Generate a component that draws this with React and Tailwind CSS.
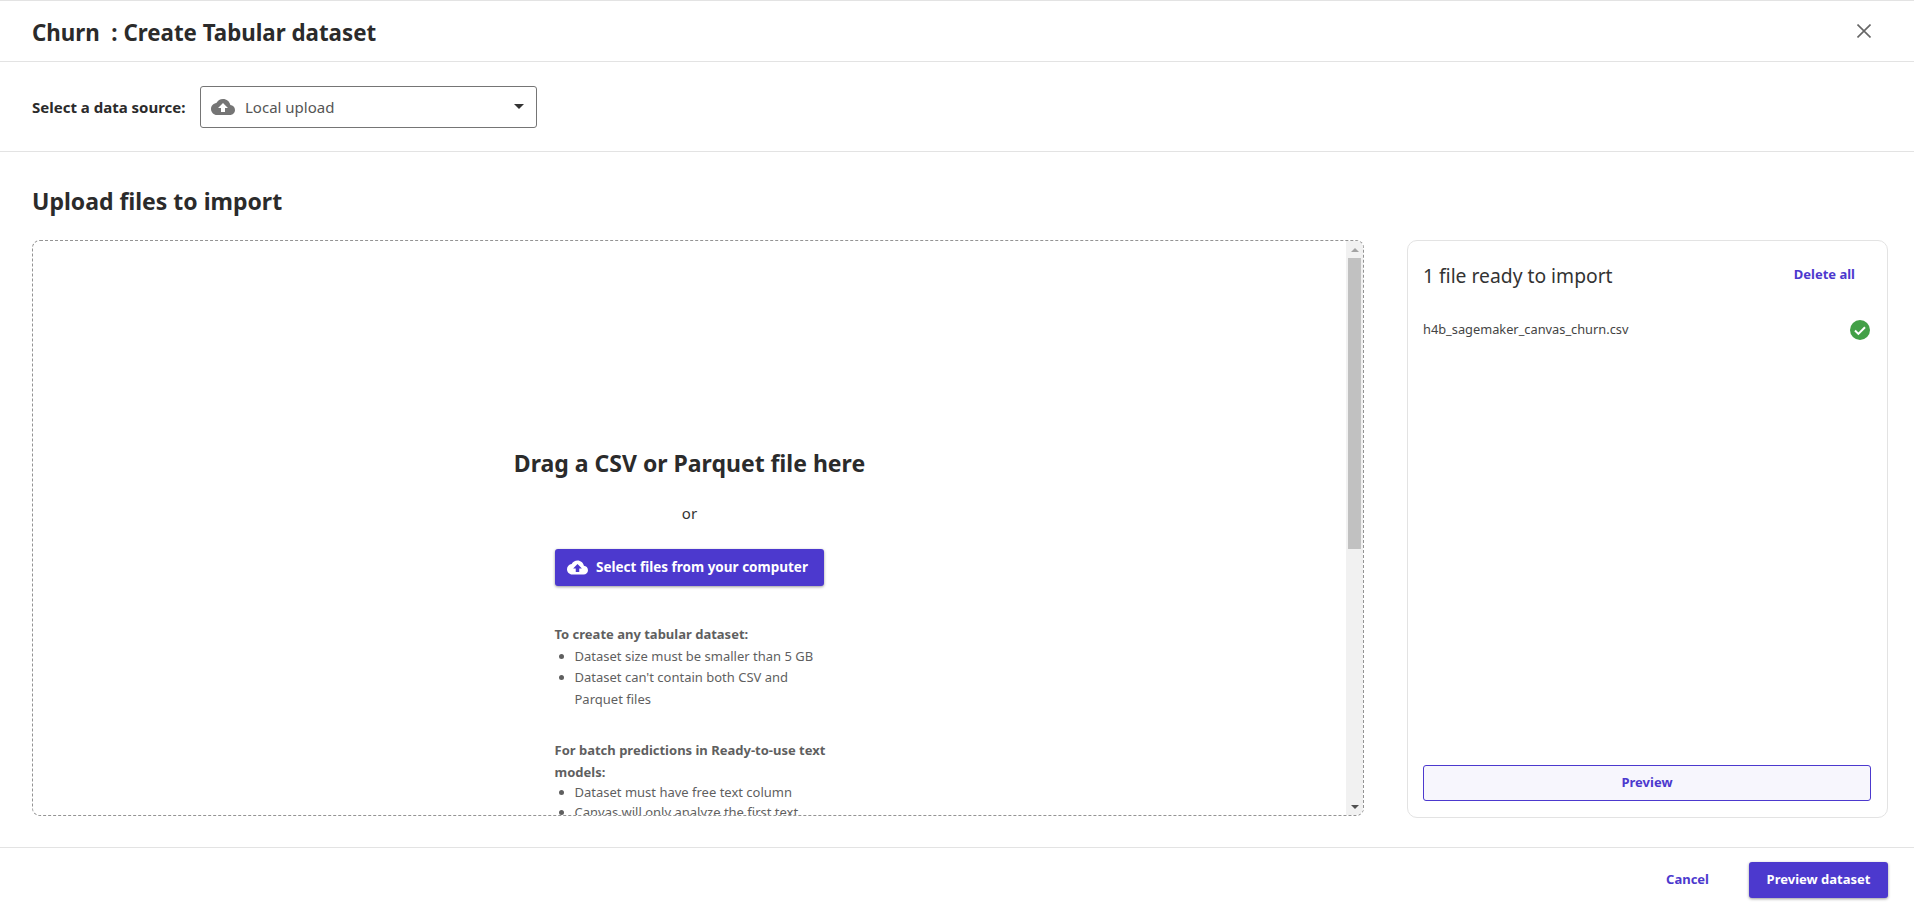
import React from "react";

function Cloud({ className, arrow }) {
  return (
    <svg viewBox="0 0 24 24" className={className} fill="currentColor">
      <path d="M19.35 10.04C18.67 6.59 15.64 4 12 4 9.11 4 6.6 5.64 5.35 8.04 2.34 8.36 0 10.91 0 14c0 3.31 2.69 6 6 6h13c2.76 0 5-2.24 5-5 0-2.64-2.05-4.78-4.65-4.96z" />
      <path fill={arrow} d="M14 13v4h-4v-4H7l5-5 5 5h-3z" />
    </svg>
  );
}

export default function App() {
  return (
    <div className="h-[911px] w-full flex flex-col bg-white overflow-hidden font-['Noto_Sans',sans-serif] text-[#2b2b2b] border-t border-[#e3e3e3]">
      <header className="h-[61px] shrink-0 flex items-center justify-between pl-[32px] pr-[43px] border-b border-[#e3e3e3]">
        <h1 className="text-[22.3px] font-bold leading-none pt-[4px]">Churn &nbsp;: Create Tabular dataset</h1>
        <svg viewBox="0 0 14 14" className="w-[14px] h-[14px] text-[#666]" fill="none" stroke="currentColor" strokeWidth="1.6">
          <path d="M0.5 0.5 13.5 13.5M13.5 0.5 0.5 13.5" />
        </svg>
      </header>

      <section className="h-[90px] shrink-0 flex items-center pl-[32px] border-b border-[#e3e3e3]">
        <span className="text-[15px] font-bold w-[168px] mt-[1px]">Select a data source:</span>
        <div className="w-[337px] h-[42px] flex items-center rounded-[3px] border border-[#757575] pl-[10px] pr-[12px]">
          <Cloud className="w-[24px] h-[24px] text-[#757575]" arrow="#ffffff" />
          <span className="ml-[10px] text-[15px] text-[#555] flex-1 mt-[2px]">Local upload</span>
          <span className="w-0 h-0 border-x-[5px] border-x-transparent border-t-[5px] border-t-[#333]" />
        </div>
      </section>

      <main className="flex-1 min-h-0 flex flex-col pl-[32px] pr-[26px] pt-[34px]">
        <h2 className="text-[23px] font-bold leading-[30px] h-[54px] shrink-0">Upload files to import</h2>
        <div className="flex gap-[43px] h-[577px]">
          <div className="flex w-[1332px] shrink-0 h-[576px] border border-dashed border-[#949494] rounded-[8px] overflow-hidden">
            <div className="flex-1 flex flex-col items-center pt-[207px] overflow-hidden">
              <div className="text-[23px] font-bold leading-[30px] shrink-0">Drag a CSV or Parquet file here</div>
              <div className="text-[15px] leading-[20px] mt-[25px] text-[#333] shrink-0">or</div>
              <button className="mt-[26px] w-[269px] h-[37px] shrink-0 flex items-center justify-center gap-[8px] pr-[4px] bg-[#4c39ce] text-white rounded-[3px] shadow-[0_1px_3px_rgba(0,0,0,0.4)] text-[13.5px] font-bold">
                <Cloud className="w-[21px] h-[21px]" arrow="#4c39ce" />
                Select files from your computer
              </button>
              <div className="w-[276px] ml-[6px] mt-[38px] shrink-0 text-[13px] leading-[21.6px] text-[#5f5f5f]">
                <div className="font-bold">To create any tabular dataset:</div>
                <ul className="list-disc pl-[20px]">
                  <li>Dataset size must be smaller than 5 GB</li>
                  <li>Dataset can't contain both CSV and Parquet files</li>
                </ul>
                <div className="font-bold mt-[30px]">For batch predictions in Ready-to-use text models:</div>
                <ul className="list-disc pl-[20px] -mt-[2px]">
                  <li>Dataset must have free text column</li>
                  <li className="-mt-[1px]">Canvas will only analyze the first text column</li>
                </ul>
              </div>
            </div>
            <div className="w-[17px] shrink-0 flex flex-col items-center bg-[#f1f1f1]">
              <div className="h-[17px] shrink-0 flex items-center justify-center">
                <span className="w-0 h-0 border-x-[4px] border-x-transparent border-b-[4px] border-b-[#a3a3a3]" />
              </div>
              <div className="w-[13px] h-[291px] shrink-0 bg-[#c1c1c1]" />
              <div className="flex-1" />
              <div className="h-[17px] shrink-0 flex items-center justify-center">
                <span className="w-0 h-0 border-x-[4px] border-x-transparent border-t-[4px] border-t-[#505050]" />
              </div>
            </div>
          </div>

          <aside className="w-[481px] shrink-0 h-[578px] flex flex-col border border-[#e3e3e3] rounded-[10px] pl-[15px] pr-[16px] pb-[16px]">
            <div className="flex items-center justify-between pt-[20px] pr-[16px]">
              <span className="text-[19.3px] leading-[30px] text-[#333]">1 file ready to import</span>
              <span className="text-[13px] font-bold text-[#4c39ce] -mt-[3px]">Delete all</span>
            </div>
            <div className="flex items-center justify-between mt-[27px]">
              <span className="text-[12.8px] text-[#444]">h4b_sagemaker_canvas_churn.csv</span>
              <svg viewBox="0 0 24 24" className="w-[24px] h-[24px] -mr-[1px] text-[#43a047]" fill="currentColor">
                <circle cx="12" cy="12" r="10" />
                <path d="M7 12.5l3.4 3.4L17 9.3" fill="none" stroke="#fff" strokeWidth="2" />
              </svg>
            </div>
            <div className="flex-1" />
            <button className="h-[36px] w-full rounded-[3px] border border-[#4c39ce] bg-[#f7f6fd] text-[#4c39ce] text-[13px] font-bold">Preview</button>
          </aside>
        </div>
      </main>

      <footer className="h-[64px] shrink-0 flex items-center justify-end gap-[40px] pr-[26px] border-t border-[#e3e3e3]">
        <button className="text-[13px] font-bold text-[#4c39ce]">Cancel</button>
        <button className="w-[139px] h-[36px] rounded-[3px] bg-[#4c39ce] text-white text-[13px] font-bold shadow-[0_1px_3px_rgba(0,0,0,0.4)]">Preview dataset</button>
      </footer>
    </div>
  );
}
